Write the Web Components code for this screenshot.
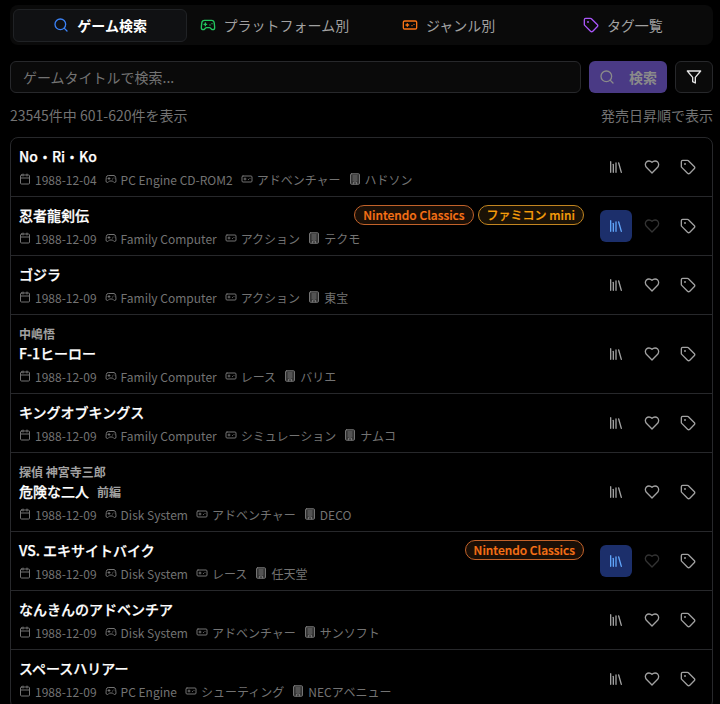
<!DOCTYPE html>
<html lang="ja"><head><meta charset="utf-8">
<style>
html,body{margin:0;background:#000;overflow:hidden;height:704px}
body{font-family:"Noto Sans CJK JP","Noto Sans",sans-serif;color:#fff}
</style></head><body>
<game-app></game-app>
<script>
const I={
search:'<circle cx="11" cy="11" r="8"/><path d="m21 21-4.3-4.3"/>',
pad:'<line x1="6" x2="10" y1="11" y2="11"/><line x1="8" x2="8" y1="9" y2="13"/><line x1="15" x2="15.01" y1="12" y2="12"/><line x1="18" x2="18.01" y1="10" y2="10"/><path d="M17.32 5H6.68a4 4 0 0 0-3.978 3.59c-.006.052-.01.101-.017.152C2.604 9.416 2 14.456 2 16a3 3 0 0 0 3 3c1 0 1.5-.5 2-1l1.414-1.414A2 2 0 0 1 9.828 16h4.344a2 2 0 0 1 1.414.586L17 18c.5.5 1 1 2 1a3 3 0 0 0 3-3c0-1.545-.604-6.584-.685-7.258-.007-.05-.011-.1-.017-.151A4 4 0 0 0 17.32 5z"/>',
genre:'<line x1="6" x2="10" y1="12" y2="12"/><line x1="8" x2="8" y1="10" y2="14"/><line x1="15" x2="15.01" y1="13" y2="13"/><line x1="18" x2="18.01" y1="11" y2="11"/><rect width="20" height="12" x="2" y="6" rx="2"/>',
tag:'<path d="M12.586 2.586A2 2 0 0 0 11.172 2H4a2 2 0 0 0-2 2v7.172a2 2 0 0 0 .586 1.414l8.704 8.704a2.426 2.426 0 0 0 3.42 0l6.58-6.58a2.426 2.426 0 0 0 0-3.42z"/><circle cx="7.5" cy="7.5" r=".5" fill="currentColor"/>',
filter:'<polygon points="22 3 2 3 10 12.46 10 19 14 21 14 12.46 22 3"/>',
lib:'<path d="m16 6 4 14"/><path d="M12 6v14"/><path d="M8 8v12"/><path d="M4 4v16"/>',
heart:'<path d="M19 14c1.49-1.46 3-3.21 3-5.5A5.5 5.5 0 0 0 16.5 3c-1.76 0-3 .5-4.5 2-1.5-1.5-2.74-2-4.5-2A5.5 5.5 0 0 0 2 8.5c0 2.3 1.5 4.05 3 5.5l7 7Z"/>',
cal:'<path d="M8 2v4"/><path d="M16 2v4"/><rect width="18" height="18" x="3" y="4" rx="2"/><path d="M3 10h18"/>',
bld:'<rect width="18" height="21" x="3" y="1.5" rx="2" fill="currentColor" fill-opacity=".45"/><path d="M9 22v-4h6v4"/><path d="M8 6h8M8 10h8M8 14h8"/>'
};
const svg=(n,s,c,w=2)=>`<svg xmlns="http://www.w3.org/2000/svg" width="${s}" height="${s}" viewBox="0 0 24 24" fill="none" stroke="${c||'currentColor'}" stroke-width="${w}" stroke-linecap="round" stroke-linejoin="round" style="flex:none;display:block">${I[n]}</svg>`;

class TabBar extends HTMLElement{constructor(){super();this.attachShadow({mode:'open'}).innerHTML=`<style>
:host{display:grid;grid-template-columns:repeat(4,1fr);margin:5px 7px 0 10px;padding:4px 3px;height:32px;background:#0a0a0a;border-radius:8px;font-size:14px;color:#a1a1a1}
.t{display:flex;align-items:center;justify-content:center;gap:8px;border-radius:6px;border:1px solid transparent;box-sizing:border-box;height:33px;padding-bottom:2px;font-weight:400}
.a{background:#101113;border-color:#202225;color:#fff;font-weight:700}
</style>
<div class="t a">${svg('search',16,'#3b82f6')}<span>ゲーム検索</span></div>
<div class="t">${svg('pad',16,'#22c55e')}<span>プラットフォーム別</span></div>
<div class="t">${svg('genre',16,'#f97316')}<span>ジャンル別</span></div>
<div class="t">${svg('tag',16,'#a855f7')}<span>タグ一覧</span></div>`}}
customElements.define('tab-bar',TabBar);

class SearchBar extends HTMLElement{constructor(){super();this.attachShadow({mode:'open'}).innerHTML=`<style>
:host{display:flex;gap:8px;margin:16px 7px 0 10px;height:32px;font-size:14px}
.i{flex:1;box-sizing:border-box;border:1px solid #27282b;border-radius:6px;background:#0a0a0a;color:#737373;padding:0 12px;display:flex;align-items:center}
.b{width:78px;box-sizing:border-box;background:#4a3a85;border-radius:6px;color:#8a8a8a;font-weight:700;display:flex;align-items:center;justify-content:center;gap:14px;padding-left:0}
.f{width:38px;box-sizing:border-box;border:1px solid #27282b;border-radius:6px;background:#0a0a0a;display:flex;align-items:center;justify-content:center;color:#e5e5e5}
</style>
<div class="i">ゲームタイトルで検索...</div>
<div class="b">${svg('search',16,'#8a8a8a')}<span>検索</span></div>
<div class="f">${svg('filter',16)}</div>`}}
customElements.define('search-bar',SearchBar);

class ResultInfo extends HTMLElement{constructor(){super();this.attachShadow({mode:'open'}).innerHTML=`<style>
:host{display:flex;justify-content:space-between;align-items:flex-start;margin:12px 7px 0 10px;height:22px;line-height:20px;font-size:14px;color:#737373}
</style><span><slot name="l"></slot></span><span><slot name="r"></slot></span>`}}
customElements.define('result-info',ResultInfo);

class GameRow extends HTMLElement{
 connectedCallback(){
  const g=k=>this.getAttribute(k)||'';
  const badges=[];
  if(this.hasAttribute('nc'))badges.push('<span class="bd o">Nintendo Classics</span>');
  if(this.hasAttribute('mini'))badges.push('<span class="bd y">ファミコン mini</span>');
  const owned=this.hasAttribute('owned');
  this.attachShadow({mode:'open'}).innerHTML=`<style>
:host{display:flex;align-items:center;padding:7px 8px 7px 8px;border-top:1px solid #27282b;gap:8px}
:host(:first-child){border-top:0}
.m{flex:1;min-width:0}
.sup{font-size:12px;font-weight:700;color:#a1a1a1;line-height:18px;margin:3px 0 -1px}
.tl{display:flex;align-items:center;height:22px;margin-bottom:2px;font-size:14px;font-weight:500;-webkit-text-stroke:.25px currentColor;color:#fff}
.sub{font-size:12px;font-weight:700;-webkit-text-stroke:0;color:#a1a1a1;margin-left:8px}
.bs{margin-left:auto;display:flex;gap:4px;margin-right:8px}
.bd{font-size:12px;font-weight:500;-webkit-text-stroke:.2px currentColor;line-height:18px;border:1px solid;border-radius:10px;padding:0 8px}
.o{color:#f97316;border-color:#c2622a;background:#1a0f06}
.y{color:#f59e0b;border-color:#c28520;background:#1a1206}
.md{display:flex;align-items:center;height:20px;font-size:12px;color:#737373;gap:8px}
.c{display:flex;align-items:center;gap:4px}
.ac{display:flex;gap:4px}
.btn{width:32px;height:32px;border-radius:6px;display:flex;align-items:center;justify-content:center;color:#a1a1a1}
.btn.on{background:#1c2f6b;color:#60a5fa}
.dim{color:#333}
</style>
<div class="m">
${g('sup')?`<div class="sup">${g('sup')}</div>`:''}
<div class="tl"><span>${g('t')}</span>${g('sub')?`<span class="sub">${g('sub')}</span>`:''}${badges.length?`<span class="bs">${badges.join('')}</span>`:''}</div>
<div class="md"><span class="c">${svg('cal',12)}${g('d')}</span><span class="c">${svg('pad',12)}${g('p')}</span><span class="c">${svg('genre',12)}${g('g')}</span><span class="c">${svg('bld',12)}${g('c')}</span></div>
</div>
<div class="ac"><div class="btn ${owned?'on':''}">${svg('lib',16)}</div><div class="btn ${owned?'dim':''}">${svg('heart',16)}</div><div class="btn">${svg('tag',16)}</div></div>`;
 }}
customElements.define('game-row',GameRow);

class GameList extends HTMLElement{constructor(){super();this.attachShadow({mode:'open'}).innerHTML=`<style>
:host{display:block;margin:10px 7px 0 10px;border:1px solid #27282b;border-radius:8px}
</style><slot></slot>`}}
customElements.define('game-list',GameList);

class GameApp extends HTMLElement{constructor(){super();this.attachShadow({mode:'open'}).innerHTML=`<style>
:host{display:block;width:720px;height:704px;overflow:hidden}
</style><tab-bar></tab-bar><search-bar></search-bar>
<result-info><span slot="l">23545件中 601-620件を表示</span><span slot="r">発売日昇順で表示</span></result-info>
<game-list>
<game-row t="No・Ri・Ko" d="1988-12-04" p="PC Engine CD-ROM2" g="アドベンチャー" c="ハドソン"></game-row>
<game-row t="忍者龍剣伝" d="1988-12-09" p="Family Computer" g="アクション" c="テクモ" nc mini owned></game-row>
<game-row t="ゴジラ" d="1988-12-09" p="Family Computer" g="アクション" c="東宝"></game-row>
<game-row sup="中嶋悟" t="F-1ヒーロー" d="1988-12-09" p="Family Computer" g="レース" c="バリエ"></game-row>
<game-row t="キングオブキングス" d="1988-12-09" p="Family Computer" g="シミュレーション" c="ナムコ"></game-row>
<game-row sup="探偵 神宮寺三郎" t="危険な二人" sub="前編" d="1988-12-09" p="Disk System" g="アドベンチャー" c="DECO"></game-row>
<game-row t="VS. エキサイトバイク" d="1988-12-09" p="Disk System" g="レース" c="任天堂" nc owned></game-row>
<game-row t="なんきんのアドベンチア" d="1988-12-09" p="Disk System" g="アドベンチャー" c="サンソフト"></game-row>
<game-row t="スペースハリアー" d="1988-12-09" p="PC Engine" g="シューティング" c="NECアベニュー"></game-row>
</game-list>`}}
customElements.define('game-app',GameApp);
</script></body></html>
